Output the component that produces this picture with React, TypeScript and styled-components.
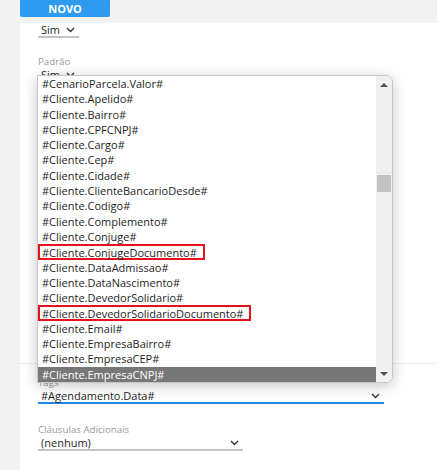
import styled, { createGlobalStyle } from 'styled-components';

const tags = [
	'#CenarioParcela.Valor#',
	'#Cliente.Apelido#',
	'#Cliente.Bairro#',
	'#Cliente.CPFCNPJ#',
	'#Cliente.Cargo#',
	'#Cliente.Cep#',
	'#Cliente.Cidade#',
	'#Cliente.ClienteBancarioDesde#',
	'#Cliente.Codigo#',
	'#Cliente.Complemento#',
	'#Cliente.Conjuge#',
	'#Cliente.ConjugeDocumento#',
	'#Cliente.DataAdmissao#',
	'#Cliente.DataNascimento#',
	'#Cliente.DevedorSolidario#',
	'#Cliente.DevedorSolidarioDocumento#',
	'#Cliente.Email#',
	'#Cliente.EmpresaBairro#',
	'#Cliente.EmpresaCEP#',
	'#Cliente.EmpresaCNPJ#',
];

const marked = ['#Cliente.ConjugeDocumento#', '#Cliente.DevedorSolidarioDocumento#'];
const selected = '#Cliente.EmpresaCNPJ#';

const Chevron = () => (
	<svg width='9' height='6' viewBox='0 0 9 6'>
		<polyline points='1,1 4.5,4.5 8,1' fill='none' stroke='#333' strokeWidth='1.4' />
	</svg>
);

export default function App() {
	return (
		<>
			<GlobalStyle />
			<Page>
				<TopBar>
					<NewButton>NOVO</NewButton>
				</TopBar>
				<Panel>
					<Form>
						<Field $gap={18}>
							<Select $width={41}>
								<span>Sim</span>
								<Chevron />
							</Select>
						</Field>
						<Field>
							<Label>Padrão</Label>
							<Select $width={41}>
								<span>Sim</span>
								<Chevron />
							</Select>
						</Field>
						<Hidden />
						<Divider />
						<Field>
							<Label>Tags</Label>
							<Select $active>
								<span>#Agendamento.Data#</span>
								<Chevron />
							</Select>
						</Field>
						<Field>
							<Label>Cláusulas Adicionais</Label>
							<Select $width={205}>
								<span>(nenhum)</span>
								<Chevron />
							</Select>
						</Field>
					</Form>
					<Popup>
						<List>
							{tags.map((t) => (
								<Item key={t} $selected={t === selected}>
									{marked.includes(t) ? <Mark>{t}</Mark> : t}
								</Item>
							))}
						</List>
						<Scrollbar>
							<Arrow $down={false} />
							<Track>
								<Thumb />
							</Track>
							<Arrow $down />
						</Scrollbar>
					</Popup>
				</Panel>
			</Page>
		</>
	);
}

const GlobalStyle = createGlobalStyle`
	body {
		margin: 0;
		background: #f2f2f2;
		font-family: 'Open Sans', 'Noto Sans', sans-serif;
	}
`;

const Page = styled.div`
	width: 437px;
	height: 470px;
	overflow: hidden;
	display: flex;
	flex-direction: column;
	padding-left: 20px;
	box-sizing: border-box;
`;

const TopBar = styled.div`
	height: 23px;
	flex-shrink: 0;
`;

const NewButton = styled.button`
	width: 90px;
	height: 17px;
	border: none;
	border-radius: 0 0 2px 2px;
	background: #2e9bf0;
	color: #fff;
	font-family: 'Open Sans', sans-serif;
	font-weight: 700;
	font-size: 11px;
	line-height: 16px;
	padding: 0;
	display: block;
`;

const Panel = styled.div`
	position: relative;
	flex: 1;
	background: #fff;
	padding-left: 18px;
`;

const Form = styled.div`
	display: flex;
	flex-direction: column;
`;

const Field = styled.div<{ $gap?: number }>`
	display: flex;
	flex-direction: column;
	margin-bottom: ${(p) => p.$gap ?? 20}px;
`;

const Label = styled.div`
	font-size: 9.7px;
	line-height: 12px;
	color: #9a9a9a;
`;

const Select = styled.div<{ $width?: number; $active?: boolean }>`
	width: ${(p) => (p.$width ? `${p.$width}px` : '346px')};
	height: 15px;
	display: flex;
	align-items: center;
	justify-content: space-between;
	box-sizing: border-box;
	padding: 0 4px 0 3px;
	font-size: 11px;
	color: #1e1e1e;
	border-bottom: ${(p) => (p.$active ? '2px solid #1e88e5' : '2px solid #c4c4c4')};
`;

const Hidden = styled.div`
	height: 260px;
`;

const Divider = styled.div`
	height: 1px;
	background: #ececec;
	margin: 0 0 13px -18px;
`;

const Popup = styled.div`
	position: absolute;
	left: 17px;
	top: 52px;
	width: 356px;
	height: 308px;
	box-sizing: border-box;
	display: flex;
	background: #fff;
	border: 1px solid #c6c6c6;
	border-radius: 0 7px 7px 0;
	box-shadow: 0 3px 14px rgba(0, 0, 0, 0.22);
	overflow: hidden;
`;

const List = styled.div`
	flex: 1;
	display: flex;
	flex-direction: column;
`;

const Item = styled.div<{ $selected: boolean }>`
	height: 15.3px;
	line-height: 15.3px;
	font-size: 11px;
	padding-left: 4px;
	white-space: nowrap;
	color: ${(p) => (p.$selected ? '#fff' : '#1e1e1e')};
	background: ${(p) => (p.$selected ? '#777' : 'transparent')};
`;

const Mark = styled.span`
	display: inline-block;
	margin-left: -4px;
	padding: 0 6px 0 2px;
	height: 16px;
	line-height: 13px;
	box-sizing: border-box;
	border: 2px solid #e8101e;
`;

const Scrollbar = styled.div`
	width: 16px;
	background: #f0f0f0;
	display: flex;
	flex-direction: column;
	align-items: center;
`;

const Track = styled.div`
	flex: 1;
	width: 100%;
	padding-top: 84px;
	box-sizing: border-box;
`;

const Thumb = styled.div`
	width: 14px;
	height: 17px;
	margin-left: 1px;
	background: #c1c1c1;
`;

const Arrow = styled.div<{ $down: boolean }>`
	width: 0;
	height: 0;
	margin: ${(p) => (p.$down ? '5px 0 6px' : '7px 0 4px')};
	border-left: 4px solid transparent;
	border-right: 4px solid transparent;
	${(p) => (p.$down ? 'border-top: 4px solid #505050;' : 'border-bottom: 4px solid #505050;')}
`;
